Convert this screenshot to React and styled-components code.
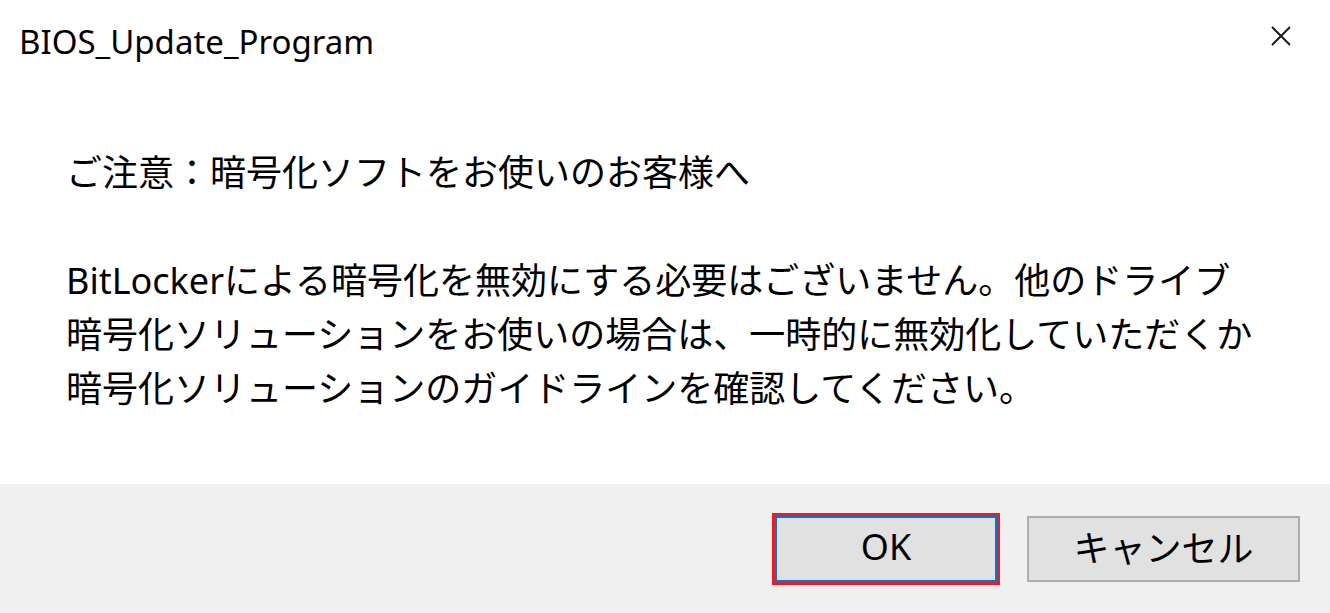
import React from "react";
import styled, { createGlobalStyle } from "styled-components";

const GlobalStyle = createGlobalStyle`
  html, body, #root {
    margin: 0;
    padding: 0;
    height: 100%;
  }
  body {
    background: #fff;
    font-family: "Noto Sans", "Noto Sans CJK JP", sans-serif;
    color: #000;
  }
`;

const App = () => {
  return (
    <>
      <GlobalStyle />
      <Dialog>
        <TitleBar>
          <Title>BIOS_Update_Program</Title>
          <CloseButton aria-label="閉じる">
            <svg width="20" height="20" viewBox="0 0 20 20">
              <path d="M1 1L19 19M19 1L1 19" stroke="#1a1a1a" strokeWidth="2" fill="none" />
            </svg>
          </CloseButton>
        </TitleBar>
        <Content>
          <Message>ご注意：暗号化ソフトをお使いのお客様へ</Message>
          <Message>
            BitLockerによる暗号化を無効にする必要はございません。他のドライブ
            <br />
            暗号化ソリューションをお使いの場合は、一時的に無効化していただくか
            <br />
            暗号化ソリューションのガイドラインを確認してください。
          </Message>
        </Content>
        <Footer>
          <Button $primary $width={222}>OK</Button>
          <Button $width={273}>キャンセル</Button>
        </Footer>
      </Dialog>
    </>
  );
};

const Dialog = styled.div`
  display: flex;
  flex-direction: column;
  height: 100%;
  background: #fff;
`;

const TitleBar = styled.div`
  display: flex;
  align-items: center;
  justify-content: space-between;
  height: 84px;
  padding: 0 39px 0 19px;
`;

const Title = styled.div`
  font-family: "Noto Sans", sans-serif;
  font-size: 33px;
  line-height: 40px;
  color: #000;
`;

const CloseButton = styled.div`
  display: flex;
  width: 20px;
  height: 20px;
  margin-bottom: 12px;
`;

const Content = styled.div`
  flex: 1;
  padding: 62px 0 0 66px;
`;

const Message = styled.p`
  margin: 0 0 54px;
  font-family: "Noto Sans", "Noto Sans CJK JP", sans-serif;
  font-size: 36px;
  line-height: 54px;
  white-space: nowrap;
`;

const Footer = styled.div`
  display: flex;
  align-items: center;
  justify-content: flex-end;
  gap: 30px;
  height: 129px;
  padding-right: 30px;
  background: #f0f0f0;
`;

const Button = styled.div`
  box-sizing: border-box;
  display: flex;
  align-items: center;
  justify-content: center;
  width: ${(p) => p.$width}px;
  height: 66px;
  padding-bottom: 5px;
  background: #e1e1e1;
  border: 2px solid ${(p) => (p.$primary ? "#0078d7" : "#adadad")};
  outline: ${(p) => (p.$primary ? "3px solid #ed1c24" : "none")};
  font-family: "Noto Sans", "Noto Sans CJK JP", sans-serif;
  font-size: 36px;
  color: #000;
`;

export default App;
